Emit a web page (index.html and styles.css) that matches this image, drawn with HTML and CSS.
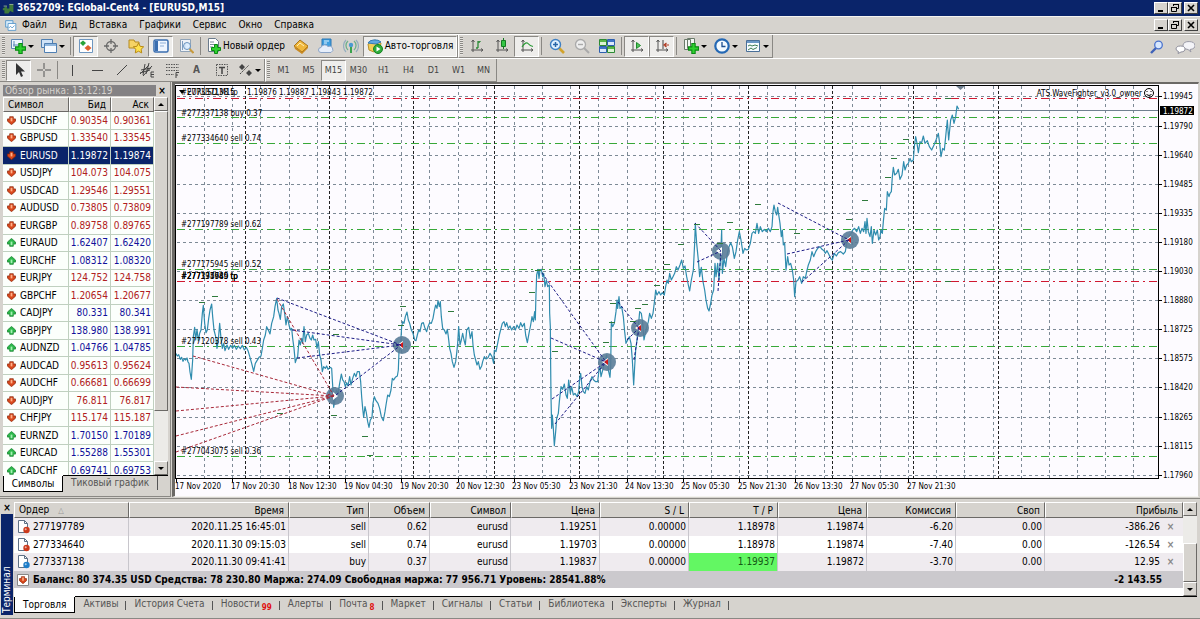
FILE: index.html
```html
<!DOCTYPE html>
<html lang="ru">
<head>
<meta charset="utf-8">
<title>3652709: EGlobal-Cent4 - [EURUSD,M15]</title>
<link rel="stylesheet" href="styles.css">
</head>
<body>
<svg class="defs" aria-hidden="true">
  <symbol id="plus" viewBox="0 0 10 10"><path d="M3.5 .5h3v3h3v3h-3v3h-3v-3h-3v-3h3z" fill="#2fd02f" stroke="#0a8a14"/></symbol>
  <symbol id="down" viewBox="0 0 10 10"><path d="M3 .8h4v2.4h2.4v2.6L5 9.6.6 5.8V3.2H3z" fill="#d9481c" stroke="#8a2408" stroke-width=".8"/><path d="M4 2h2v4H4z" fill="#ffb28a"/></symbol>
  <symbol id="up" viewBox="0 0 10 10"><path d="M3 9.2h4V6.8h2.4V4.4L5 .5.6 4.4v2.4H3z" fill="#2bb84a" stroke="#0c7a26" stroke-width=".8"/><path d="M4 4h2v4H4z" fill="#a4f0b2"/></symbol>
  <symbol id="order" viewBox="0 0 13 14"><path d="M1.5.5h6l3 3v9h-9z" fill="#fff" stroke="#5f7186"/><path d="M7.500.5v3h3" fill="none" stroke="#5f7186"/><circle cx="9.500" cy="10" r="3.200" fill="currentColor"/><circle cx="8.700" cy="9.200" r="1" fill="#fff" opacity=".6"/></symbol>
  <symbol id="min" viewBox="0 0 12 10"><path d="M3 7h5v2H3z"/></symbol>
  <symbol id="restore" viewBox="0 0 12 10"><path d="M4.500 3V1.500h5v4H8M2.500 4.500h5v4h-5zM4 1.500h6M2 4.500h6" fill="none" stroke="#000"/></symbol>
  <symbol id="close" viewBox="0 0 12 10"><path d="M3 2l6 6M9 2L3 8" stroke="#000" stroke-width="1.600"/></symbol>
  <symbol id="axes" viewBox="0 0 16 16"><path d="M4 2v12M2 12h12M2.500 4L4 2l1.500 2M12 10.500l2 1.500-2 1.500" fill="none" stroke="#555"/></symbol>
</svg>

<header class="titlebar">
  <svg class="logo" viewBox="0 0 16 14"><path d="M1 7l5-3v3h3V2h5v10l-4-2-2 3H3V9H1z" fill="#3f7a3c"/><path d="M2 4h4M9 2h5" stroke="#a9c49a"/></svg>
  <h1>3652709: EGlobal-Cent4 - [EURUSD,M15]</h1>
  <div class="win"><button aria-label="Свернуть"><svg><use href="#min"/></svg></button><button aria-label="Развернуть"><svg><use href="#restore"/></svg></button><button class="x" aria-label="Закрыть"><svg><use href="#close"/></svg></button></div>
</header>

<nav class="menubar">
  <svg class="logo" viewBox="0 0 16 14"><path d="M2 1h9v8H2z" fill="#d9ecfb" stroke="#4a90c8"/><path d="M5 4.500h9.500V13H5z" fill="#fff" stroke="#4a90c8"/><path d="M6 10l2-2 2 2 3-3" fill="none" stroke="#4a90c8"/></svg>
  <button>Файл</button><button>Вид</button><button>Вставка</button><button>Графики</button><button>Сервис</button><button>Окно</button><button>Справка</button>
  <div class="win"><button aria-label="Свернуть окно"><svg><use href="#min"/></svg></button><button aria-label="Восстановить окно"><svg><use href="#restore"/></svg></button><button class="x" aria-label="Закрыть окно"><svg><use href="#close"/></svg></button></div>
</nav>

<div class="toolrow">
  <div class="toolbar">
    <i class="grip"></i>
    <button class="tb drop" aria-label="Новый график"><svg viewBox="0 0 16 16"><path d="M1.500 1.500h11v9h-11z" fill="#eef6ff" stroke="#5d87b5"/><path d="M4 3v6M3 7h8" stroke="#5d87b5"/><use href="#plus" x="5" y="5" width="11" height="11"/></svg></button>
    <button class="tb drop" aria-label="Профили"><svg viewBox="0 0 16 16"><path d="M.500 1.500h11v8H.500z" fill="#cfe2f6" stroke="#4f7fb2"/><path d="M3.500 5.500h12v9h-12z" fill="#f6faff" stroke="#4f7fb2"/><path d="M4 6h11v2H4z" fill="#8fb6de"/></svg></button>
    <i class="sep"></i>
    <button class="tb on" aria-label="Обзор рынка"><svg viewBox="0 0 16 16"><path d="M1.500 1.500h13v13h-13z" fill="#fff" stroke="#6f97c0"/><path d="M5 2.500L8 5 5 8 2 5z" fill="#2aa43a"/><path d="M10 7l3.500 3-3.500 3-3.500-3z" fill="#e0602c"/></svg></button>
    <button class="tb" aria-label="Окно данных"><svg viewBox="0 0 16 16"><circle cx="8" cy="8" r="4.500" fill="none" stroke="#6a6a6a" stroke-width="1.300"/><path d="M8 1v5M8 10v5M1 8h5M10 8h5" stroke="#6a6a6a" stroke-width="1.300"/></svg></button>
    <button class="tb" aria-label="Навигатор"><svg viewBox="0 0 16 16"><path d="M1 2h5l1 2h4v6H1z" fill="#f6d365" stroke="#b58a20"/><path d="M10.500 5l1.600 3.300 3.600.5-2.600 2.500.6 3.600-3.200-1.700-3.200 1.700.6-3.600-2.600-2.500 3.600-.5z" fill="#ffe14d" stroke="#b88a14"/></svg></button>
    <button class="tb on" aria-label="Терминал"><svg viewBox="0 0 16 16"><rect x="1" y="2" width="14" height="12" rx="1.500" fill="#eef5ff" stroke="#3a6eb0" stroke-width="1.500"/><path d="M2 3h3v10H2z" fill="#3a6eb0"/><path d="M7 5h6M7 8h4" stroke="#8fb0d8"/></svg></button>
    <button class="tb" aria-label="Тестер стратегий"><svg viewBox="0 0 16 16"><path d="M2.500 1.500h10v12h-10z" fill="#eef2f7" stroke="#8fa3b8"/><path d="M4.500 3v9M7 5v5" stroke="#7d9dc0"/><circle cx="9" cy="8" r="3.500" fill="#d8ecff" fill-opacity=".8" stroke="#6a93bd"/><path d="M11.500 11l4 4" stroke="#c79a3c" stroke-width="2"/></svg></button>
    <i class="sep"></i>
    <button class="tb order-btn"><svg viewBox="0 0 16 16"><path d="M2.500.5h7l3 3v10h-10z" fill="#fff" stroke="#6b7b8c"/><path d="M4 4h4M4 6.500h6M4 9h3" stroke="#7d8c9c"/><use href="#plus" x="5" y="6" width="10" height="10"/></svg>Новый ордер</button>
    <button class="tb" aria-label="MetaEditor"><svg viewBox="0 0 16 16"><path d="M1 8l6-6 8 6-6 6z" fill="#f0b73c" stroke="#a8741a"/><path d="M1 8l1 3 7 5 6-6V8l-6 6z" fill="#c98a22"/><path d="M4 8l3-3 4 3" fill="none" stroke="#fff0b8"/></svg></button>
    <button class="tb" aria-label="Серверы"><svg viewBox="0 0 16 16"><path d="M4 1h9v8H4z" fill="#3f9fe0" stroke="#2b76b4"/><path d="M6 3h5M6 5h3" stroke="#e2f4ff"/><path d="M3 14.500a2.500 2.500 0 0 1 0-5 4 4 0 0 1 7-1 3 3 0 0 1 3 6z" fill="#e6eefa" stroke="#8ba3c6"/></svg></button>
    <button class="tb" aria-label="Сигналы"><svg viewBox="0 0 16 16" fill="none"><path d="M5 12a6 6 0 0 1 0-9M11 3a6 6 0 0 1 0 9" stroke="#6fb08a" stroke-width="1.300"/><path d="M3 14a8.500 8.500 0 0 1 0-12M13 2a8.500 8.500 0 0 1 0 12" stroke="#95aebf" stroke-width="1.200"/><circle cx="8" cy="7" r="2.200" fill="#4a9bd0"/><path d="M8 9v6" stroke="#3aa34c" stroke-width="2"/></svg></button>
    <button class="tb on auto-btn"><svg viewBox="0 0 16 16"><path d="M1 6l7-4 6 3-1 5-6 4-5-2z" fill="#f3cf58" stroke="#b98f28"/><path d="M1 5a7 4 0 0 1 13-1l-5 2z" fill="#5fa8e0" stroke="#357cb5"/><circle cx="11" cy="11" r="4.500" fill="#2eae3c" stroke="#178024"/><path d="M9.500 8.500l4 2.500-4 2.500z" fill="#fff"/></svg>Авто-торговля</button>
  </div>
  <div class="toolbar">
    <i class="grip"></i>
    <button class="tb" aria-label="Бары"><svg viewBox="0 0 16 16"><use href="#axes"/><path d="M7 10h2M9 3v7M9 4h2M11 4v-1" stroke="#2a8a36" stroke-width="1.300"/></svg></button>
    <button class="tb" aria-label="Свечи"><svg viewBox="0 0 16 16"><use href="#axes"/><path d="M9.500 0v11" stroke="#157a22"/><path d="M7.500 2.500h4v6h-4z" fill="#34c544" stroke="#157a22"/></svg></button>
    <button class="tb on" aria-label="Линия"><svg viewBox="0 0 16 16"><use href="#axes"/><path d="M3 9q4-6 6-3.500t5 3" fill="none" stroke="#2a9a36" stroke-width="1.200"/></svg></button>
    <i class="sep"></i>
    <button class="tb" aria-label="Увеличить"><svg viewBox="0 0 16 16"><path d="M10 10l5 5" stroke="#d2a32c" stroke-width="2.600"/><circle cx="6.500" cy="6.500" r="5" fill="#dff0ff" stroke="#3f80c4" stroke-width="1.400"/><path d="M4 6.500h5M6.500 4v5" stroke="#2865a8" stroke-width="1.500"/></svg></button>
    <button class="tb" aria-label="Уменьшить"><svg viewBox="0 0 16 16"><path d="M10 10l5 5" stroke="#aaa" stroke-width="2"/><circle cx="6.500" cy="6.500" r="5" fill="#eee" stroke="#aaa" stroke-width="1.300"/><path d="M4 6.500h5" stroke="#aaa" stroke-width="1.400"/></svg></button>
    <button class="tb" aria-label="Расположить окна"><svg viewBox="0 0 16 16"><path d="M.500 1.500h7v6h-7zM8.500 8.500h7v6h-7z" fill="#dcf3d4" stroke="#2d8a34"/><path d="M8.500 1.500h7v6h-7zM.500 8.500h7v6h-7z" fill="#dbe9fb" stroke="#2d5fae"/><path d="M1 2h6v2H1zM9 9h6v2H9z" fill="#58b548"/><path d="M9 2h6v2H9zM1 9h6v2H1z" fill="#3f74c8"/></svg></button>
    <i class="sep"></i>
    <button class="tb on" aria-label="Автопрокрутка"><svg viewBox="0 0 16 16"><use href="#axes"/><path d="M7.500 4.500l4 3-4 3z" fill="#4fc75a" stroke="#1f8a2c"/></svg></button>
    <button class="tb on" aria-label="Сдвиг графика"><svg viewBox="0 0 16 16"><use href="#axes"/><path d="M9 2v9" stroke="#444"/><path d="M15 7h-4M12.500 5L10 7l2.500 2" fill="none" stroke="#b03a22" stroke-width="1.200"/></svg></button>
    <i class="sep"></i>
    <button class="tb drop" aria-label="Индикаторы"><svg viewBox="0 0 16 16"><path d="M1.500 1.500h6v10h-6zM4.500.500h7v10h-7z" fill="#f3f7f3" stroke="#6a7a6a"/><use href="#plus" x="5" y="5" width="11" height="11"/></svg></button>
    <button class="tb drop" aria-label="Периоды"><svg viewBox="0 0 16 16"><circle cx="8" cy="8" r="6.700" fill="#f3faff" stroke="#2468b4" stroke-width="2.200"/><path d="M8 4v4.500h3.500" fill="none" stroke="#1c4f90" stroke-width="1.300"/></svg></button>
    <button class="tb drop" aria-label="Шаблоны"><svg viewBox="0 0 16 16"><path d="M1.500 2.500h13v11h-13z" fill="#f6fbff" stroke="#4a6f98"/><path d="M2 3h12v2H2z" fill="#6a97c6"/><path d="M3 8l2-1 2 1 3-1 3 1M3 12l3-2 2 1.500 4-2" fill="none" stroke="#3b7a52"/></svg></button>
  </div>
  <div class="right-tools">
    <button aria-label="Поиск"><svg viewBox="0 0 14 14"><path d="M6 8l-5 5" stroke="#3f62b8" stroke-width="2.400"/><circle cx="8.500" cy="5" r="3.800" fill="#d8e8ff" stroke="#4a72cc" stroke-width="1.300"/></svg></button>
    <button aria-label="Чат"><svg class="wide" viewBox="0 0 20 14"><path d="M8 5a6 4 0 1 1 7 4.500l1 2.500-3-2.500A6 4 0 0 1 8 5z" fill="#f4f4f8" stroke="#9a9aa6"/><path d="M1 9a4.500 3 0 1 1 5 3l-3 1.500.5-2A4 3 0 0 1 1 9z" fill="#fff" stroke="#8f8f9c"/></svg></button>
  </div>
</div>

<div class="toolrow second">
  <div class="toolbar">
    <i class="grip"></i>
    <button class="tb on" aria-label="Курсор"><svg viewBox="0 0 16 16"><path d="M5 1v12l3-3 2 5 2-1-2-4.500h4z" fill="#333"/></svg></button>
    <button class="tb" aria-label="Перекрестие"><svg viewBox="0 0 16 16"><path d="M8 1v6M8 9v6M1 8h6M9 8h6" stroke="#555"/></svg></button>
    <i class="sep"></i>
    <button class="tb" aria-label="Вертикальная линия"><svg viewBox="0 0 16 16"><path d="M8.500 3v11" stroke="#444"/></svg></button>
    <button class="tb" aria-label="Горизонтальная линия"><svg viewBox="0 0 16 16"><path d="M3 8.500h11" stroke="#444"/></svg></button>
    <button class="tb" aria-label="Трендовая линия"><svg viewBox="0 0 16 16"><path d="M3 13L13 3" stroke="#444"/></svg></button>
    <button class="tb" aria-label="Равноудаленный канал"><svg viewBox="0 0 16 16"><path d="M1 12L10 3M4 14l9-10M2 8l10-2M1 11l10-3M6 2L4 13M10 1L7 12" stroke="#444" fill="none"/><path d="M15 10h-3v5h3M12 12.500h3" fill="none" stroke="#444"/></svg></button>
    <button class="tb" aria-label="Линии Фибоначчи"><svg viewBox="0 0 16 16"><path d="M2 2.500h13M2 5.500h13M2 8.500h13M2 12.500h8" stroke="#555" stroke-dasharray="1.500 1"/><path d="M15 10.500h-3V16M12 13h2" fill="none" stroke="#444"/></svg></button>
    <button class="tb letter">A</button>
    <button class="tb" aria-label="Текстовая метка"><svg viewBox="0 0 16 16"><path d="M2.500 2.500h11v11h-11z" fill="none" stroke="#555" stroke-dasharray="1.500 1"/><path d="M5 5.500h6M8 5.500V12" stroke="#444" stroke-width="1.500"/></svg></button>
    <button class="tb drop" aria-label="Стрелки"><svg viewBox="0 0 16 16"><path d="M5 2l3 3-3 3-3-3zM12 8l3 3-3 3-3-3z" fill="#444"/><path d="M3 12l9-9" stroke="#444" stroke-dasharray="2 1"/></svg></button>
  </div>
  <div class="toolbar periods">
    <i class="grip"></i>
    <button class="tb">M1</button><button class="tb">M5</button><button class="tb on">M15</button><button class="tb">M30</button><button class="tb">H1</button><button class="tb">H4</button><button class="tb">D1</button><button class="tb">W1</button><button class="tb">MN</button>
  </div>
</div>

<main class="work">
  <section class="watch">
    <div class="watch-title"><h2>Обзор рынка: 13:12:19</h2><button aria-label="Закрыть обзор рынка">×</button></div>
    <div class="watch-body">
      <div class="watch-list">
        <table>
          <colgroup><col><col class="c-bid"><col class="c-ask"></colgroup>
          <thead><tr><th>Символ</th><th>Бид</th><th>Аск</th></tr></thead>
          <tbody>
            <tr class="dn"><td><svg><use href="#down"/></svg>USDCHF</td><td>0.90354</td><td>0.90361</td></tr>
            <tr class="dn"><td><svg><use href="#down"/></svg>GBPUSD</td><td>1.33540</td><td>1.33545</td></tr>
            <tr class="sel"><td><svg><use href="#down"/></svg>EURUSD</td><td>1.19872</td><td>1.19874</td></tr>
            <tr class="dn"><td><svg><use href="#down"/></svg>USDJPY</td><td>104.073</td><td>104.075</td></tr>
            <tr class="dn"><td><svg><use href="#down"/></svg>USDCAD</td><td>1.29546</td><td>1.29551</td></tr>
            <tr class="dn"><td><svg><use href="#down"/></svg>AUDUSD</td><td>0.73805</td><td>0.73809</td></tr>
            <tr class="dn"><td><svg><use href="#down"/></svg>EURGBP</td><td>0.89758</td><td>0.89765</td></tr>
            <tr><td><svg><use href="#up"/></svg>EURAUD</td><td>1.62407</td><td>1.62420</td></tr>
            <tr><td><svg><use href="#up"/></svg>EURCHF</td><td>1.08312</td><td>1.08320</td></tr>
            <tr class="dn"><td><svg><use href="#down"/></svg>EURJPY</td><td>124.752</td><td>124.758</td></tr>
            <tr class="dn"><td><svg><use href="#down"/></svg>GBPCHF</td><td>1.20654</td><td>1.20677</td></tr>
            <tr><td><svg><use href="#up"/></svg>CADJPY</td><td>80.331</td><td>80.341</td></tr>
            <tr><td><svg><use href="#up"/></svg>GBPJPY</td><td>138.980</td><td>138.991</td></tr>
            <tr><td><svg><use href="#up"/></svg>AUDNZD</td><td>1.04766</td><td>1.04785</td></tr>
            <tr class="dn"><td><svg><use href="#down"/></svg>AUDCAD</td><td>0.95613</td><td>0.95624</td></tr>
            <tr class="dn"><td><svg><use href="#down"/></svg>AUDCHF</td><td>0.66681</td><td>0.66699</td></tr>
            <tr class="dn"><td><svg><use href="#down"/></svg>AUDJPY</td><td>76.811</td><td>76.817</td></tr>
            <tr class="dn"><td><svg><use href="#down"/></svg>CHFJPY</td><td>115.174</td><td>115.187</td></tr>
            <tr><td><svg><use href="#up"/></svg>EURNZD</td><td>1.70150</td><td>1.70189</td></tr>
            <tr><td><svg><use href="#up"/></svg>EURCAD</td><td>1.55288</td><td>1.55301</td></tr>
            <tr><td><svg><use href="#up"/></svg>CADCHF</td><td>0.69741</td><td>0.69753</td></tr>
          </tbody>
        </table>
      </div>
      <div class="scroll"><button class="arrow" aria-label="Вверх"></button><div class="thumb"></div><div class="track"></div><button class="arrow down" aria-label="Вниз"></button></div>
    </div>
    <div class="tabs watch-tabs"><button class="active">Символы</button><button>Тиковый график</button></div>
  </section>

  <section class="chart">
    <svg viewBox="175 84 1023 412" role="img" aria-label="EURUSD M15">
      <g class="grid">
        <path d="M176 96H1158M176 126H1158M176 155H1158M176 184H1158M176 213H1158M176 242H1158M176 271H1158M176 300H1158M176 329H1158M176 358H1158M176 387H1158M176 417H1158M176 446H1158M176 475H1158"/>
        <path d="M204 85V478M232 85V478M260 85V478M289 85V478M317 85V478M345 85V478M373 85V478M401 85V478M429 85V478M458 85V478M486 85V478M514 85V478M542 85V478M570 85V478M598 85V478M627 85V478M655 85V478M683 85V478M711 85V478M739 85V478M767 85V478M795 85V478M824 85V478M852 85V478M880 85V478M908 85V478M936 85V478M964 85V478M993 85V478M1021 85V478M1049 85V478M1077 85V478M1105 85V478M1133 85V478"/>
      </g>
      <path class="days" d="M245 85V478M329 85V478M413 85V478M494 85V478M579 85V478M663 85V478M748 85V478M832 85V478M913 85V478M998 85V478"/>
      <path class="bidline" d="M176 110H1158"/>
      <path class="entry" d="M176 117H1158M176 143H1158M176 229H1158M176 269H1158M176 346H1158M176 456H1158"/>
      <path class="profit" d="M176 98H1158M176 281H1158"/>

      <g class="price">
        <polyline transform="translate(170 280) scale(.33333)" points="17,220 22,228 26,224 31,238 35,232 39,244 43,236 47,240 51,234 54,246 57,250 60,276 64,298 68,240 70,170 74,142 77,180 81,148 85,182 89,160 93,150 97,100 100,76 104,130 108,158 112,150 116,116 120,90 125,72 128,110 132,150 137,170 141,205 145,180 149,130 153,175 157,205 161,190 165,212 171,195 176,208 182,196 188,205 193,196 199,208 205,198 211,206 217,196 223,210 229,202 234,212 240,232 245,250 251,274 256,250 261,242 267,232 273,228 277,205 281,180 286,165 290,140 295,150 300,162 305,130 311,110 315,80 320,55 324,90 327,100 331,118 335,80 340,72 344,100 348,135 352,110 357,135 361,150 365,145 368,175 372,205 376,248 380,235 383,230 387,180 391,195 395,175 398,190 402,140 406,185 410,165 415,160 420,175 424,180 428,165 432,180 437,178 441,205 445,185 449,225 453,240 457,275 461,260 466,265 470,258 474,268 480,262 485,265 487,300 490,350 491,382 495,360 499,330 504,340 509,310 514,282 518,300 522,305 526,320 530,308 534,318 539,290 543,315 548,295 553,280 558,290 562,275 568,275 572,305 575,350 578,385 581,412 585,380 589,398 593,425 597,442 601,420 606,412 609,370 613,350 618,362 624,370 629,385 634,410 640,422 645,395 648,375 653,345 658,350 663,330 667,295 671,300 676,292 682,288 685,270 687,215 691,205 695,140 698,125 702,130 706,110 711,96 715,120 719,130 724,150 729,160 734,180 738,182 742,165 746,150 750,155 755,130 760,128 765,145 770,155 774,140 779,128 784,130 789,115 793,92 797,75 801,85 804,62 808,80 811,65 814,110 818,145 823,150 828,162 832,148 835,170 839,205 843,220 847,245 852,262 857,245 860,220 863,190 866,140 870,195 874,180 878,160 882,180 886,195 890,150 896,142 901,175 906,155 909,195 913,225 917,240 921,255 925,245 930,268 935,258"/>
        <polyline transform="translate(480 180) scale(.33333)" points="5,558 8,545 13,530 18,537 24,533 30,520 36,530 41,550 43,510 48,515 53,490 58,465 63,445 67,430 72,425 76,440 80,428 85,445 90,438 95,450 101,440 106,450 111,435 117,445 122,428 127,440 133,430 137,465 142,488 147,460 152,435 156,410 160,425 164,395 166,420 168,340 170,285 174,268 177,295 180,270 184,268 188,290 191,280 195,320 199,300 203,320 208,315 209,400 211,440 212,560 213,650 215,745 217,705 220,745 223,797 227,755 230,715 235,700 238,665 243,620 248,628 253,612 258,645 262,655 266,600 271,640 275,620 280,645 285,640 291,650 296,635 299,595 302,580 306,620 310,635 315,640 320,620 325,630 330,605 336,590 341,600 347,605 353,605 357,570 360,560 363,590 367,575 371,560 376,540 380,525 385,570 390,592 392,560 394,425 398,440 403,430 408,395 411,360 413,385 417,350 420,385 425,380 430,410 434,455 438,490 443,480 448,470 453,490 457,540 461,615 464,560 467,510 471,480 475,440 479,395 484,400 488,430 492,480 497,455 501,440 505,425 509,400 514,415 519,400 524,360 527,330 531,345 537,335 542,345 547,338 553,345 557,320 561,300 565,310 569,280 574,300 579,290 584,280 589,260 594,270 600,255 605,240 610,265 615,258 620,290 625,315 629,333 634,300 640,270 644,190 646,130 650,190 655,240 659,290 664,262 669,305 674,330 678,360 683,385 687,393 692,370 696,345 701,330 705,250 708,290 713,250 717,300 722,230 725,150 727,280 732,235 737,260 742,220 747,200 752,188 757,200 763,235 768,215 773,180 778,155 783,180 789,220 794,205 799,210 805,208 811,190 816,160 821,155 826,160 831,130 836,160 841,140 847,155 853,148 859,155 865,145 871,155 876,140 879,95 882,75 886,95 890,105 893,82 897,110 900,130 904,170 907,150 910,195 914,190 918,270 923,230 927,255 932,250 937,270 941,300 944,350 948,305 954,300 959,290 965,310 970,290 976,295 980,275 985,255 991,240 996,215 1001,230 1007,215 1013,205 1020,200 1026,208 1032,212 1036,220 1041,212 1046,222 1052,235 1057,240 1063,220 1069,228 1075,218 1082,215 1090,222 1096,215 1100,190 1106,170 1112,162 1118,150 1124,145 1130,155 1136,140 1141,160 1146,145 1151,155 1155,125 1158,160 1161,115 1165,155 1170,170 1174,140 1177,190 1182,150 1187,165 1192,150 1196,180 1200,170"/>
        <polyline transform="translate(850 80) scale(.33333)" points="90,470 93,450 97,460 100,425 104,385 109,390 112,335 117,350 120,340 124,335 127,290 130,262 134,285 140,280 145,268 150,298 156,285 161,245 165,270 170,255 175,250 180,235 184,245 190,240 193,200 197,170 201,190 205,218 210,185 215,188 220,168 225,190 232,182 238,200 245,210 252,195 258,180 265,160 269,190 273,230 278,205 283,210 288,160 292,120 296,180 302,120 307,105 312,130 317,110 321,78 326,88"/>
      </g>

      <g class="marks">
        <circle cx="335" cy="396" r="9"/><circle cx="402" cy="345" r="9"/><circle cx="607" cy="362" r="9"/><circle cx="640" cy="328" r="9"/><circle cx="721" cy="251" r="9"/><circle cx="850" cy="240" r="9"/>
        <path d="M403 341v8l-6-4zM608 358v8l-6-4zM641 324v8l-6-4zM722 247v8l-6-4zM851 236v8l-6-4zM333 392l5 4-5 4z" class="white"/>
        <path d="M403 342v6l-4-3zM608 359v6l-4-3zM641 325v6l-4-3zM851 237v6l-4-3z" class="red"/>
      </g>
      <path class="loss-trend" d="M193 356L334 396M176 387L334 396M176 411L334 396M176 436L334 396M176 452L334 396M277 299L334 396"/>
      <path class="trend" d="M277 298L401 345M292 330L401 345M297 358L401 345M336 395L401 345M542 273L606 362M551 338L606 362M552 399L606 362M555 424L606 362M618 302L639 328M627 340L639 328M634 360L639 328M695 223L721 251M697 262L721 251M718 291L721 251M778 203L849 240M787 254L849 240M802 282L849 240"/>
      <path class="ticks" d="M198 302h6M211 296h6M332 334h6M399 306h6M447 311h6M397 325h6M276 413h6M330 415h6M361 436h6M366 455h6M534 270h6M528 292h6M551 351h6M609 303h6M608 322h6M602 342h6M634 308h6M641 304h6M653 285h6M663 264h6M677 244h6M693 224h6M726 222h6M754 204h6M716 243h6M793 233h6M845 219h6M861 200h6M884 177h6M890 158h6M902 139h6M913 117h6M944 98h6M944 281h6M629 321h6"/>

      <path class="axis" d="M175 85H1158V478H175ZM1158 96h3M1158 126h3M1158 155h3M1158 184h3M1158 213h3M1158 242h3M1158 271h3M1158 300h3M1158 329h3M1158 358h3M1158 387h3M1158 417h3M1158 446h3M1158 475h3M176 478v3M232 478v3M289 478v3M345 478v3M401 478v3M458 478v3M514 478v3M570 478v3M627 478v3M683 478v3M739 478v3M795 478v3M852 478v3M908 478v3"/>
      <path class="shift" d="M956 86h9l-4.500 4z"/>

      <g class="label">
        <text x="181" y="95">#277337138 tp</text><path d="M179 90h6l-3 4z"/>
        <text x="187" y="95">EURUSD,M15</text><text x="247" y="95">1.19876 1.19887 1.19843 1.19872</text>
        <text x="181" y="116">#277337138 buy 0.37</text>
        <text x="181" y="141">#277334640 sell 0.74</text>
        <text x="181" y="227">#277197789 sell 0.62</text>
        <text x="181" y="267">#277175945 sell 0.52</text>
        <text x="181" y="279">#277197789 tp</text><text x="181" y="279">#277334640 tp</text><text x="181" y="279">#277175945 tp</text>
        <text x="181" y="344">#277120378 sell 0.43</text>
        <text x="181" y="454">#277043075 sell 0.36</text>
        <text x="1142" y="96" text-anchor="end">ATS.WaveFighter_v3.0_owner</text>
        <g fill="none" stroke="#000"><circle cx="1149" cy="93" r="4.500"/><path d="M1147 91v1M1151 91v1M1146.500 94.500q2.500 2 5 0"/></g>
      </g>
      <g class="label">
        <text x="1163" y="99">1.19945</text><text x="1163" y="129">1.19790</text><text x="1163" y="158">1.19640</text><text x="1163" y="187">1.19485</text><text x="1163" y="216">1.19335</text><text x="1163" y="245">1.19180</text><text x="1163" y="274">1.19030</text><text x="1163" y="303">1.18880</text><text x="1163" y="332">1.18725</text><text x="1163" y="361">1.18575</text><text x="1163" y="390">1.18420</text><text x="1163" y="420">1.18265</text><text x="1163" y="449">1.18115</text><text x="1163" y="478">1.17960</text>
        <path d="M1160 106h34v9h-34z"/><text x="1163" y="114" class="bid">1.19872</text>
      </g>
      <g class="label">
        <text x="175" y="489">17 Nov 2020</text><text x="231" y="489">17 Nov 20:30</text><text x="288" y="489">18 Nov 12:30</text><text x="344" y="489">19 Nov 04:30</text><text x="400" y="489">19 Nov 20:30</text><text x="456" y="489">20 Nov 12:30</text><text x="512" y="489">23 Nov 05:30</text><text x="569" y="489">23 Nov 21:30</text><text x="625" y="489">24 Nov 13:30</text><text x="681" y="489">25 Nov 05:30</text><text x="738" y="489">25 Nov 21:30</text><text x="794" y="489">26 Nov 13:30</text><text x="850" y="489">27 Nov 05:30</text><text x="907" y="489">27 Nov 21:30</text>
      </g>
    </svg>
  </section>
</main>

<section class="terminal">
  <div class="side"><button aria-label="Закрыть терминал">×</button><h2>Терминал</h2></div>
  <div class="term-main">
    <div class="term-body">
      <div class="orders">
        <table>
          <colgroup><col class="w115"><col class="w160"><col class="w80"><col class="w61"><col class="w81"><col class="w89"><col class="w89"><col class="w89"><col class="w89"><col class="w89"><col class="w89"><col></colgroup>
          <thead><tr><th>Ордер <span class="sort">△</span></th><th>Время</th><th>Тип</th><th>Объем</th><th>Символ</th><th>Цена</th><th>S / L</th><th>T / P</th><th>Цена</th><th>Комиссия</th><th>Своп</th><th>Прибыль</th></tr></thead>
          <tbody>
            <tr><td><svg class="sell"><use href="#order"/></svg>277197789</td><td>2020.11.25 16:45:01</td><td>sell</td><td>0.62</td><td>eurusd</td><td>1.19251</td><td>0.00000</td><td>1.18978</td><td>1.19874</td><td>-6.20</td><td>0.00</td><td>-386.26<button aria-label="Закрыть ордер">×</button></td></tr>
            <tr><td><svg class="sell"><use href="#order"/></svg>277334640</td><td>2020.11.30 09:15:03</td><td>sell</td><td>0.74</td><td>eurusd</td><td>1.19703</td><td>0.00000</td><td>1.18978</td><td>1.19874</td><td>-7.40</td><td>0.00</td><td>-126.54<button aria-label="Закрыть ордер">×</button></td></tr>
            <tr><td><svg class="buy"><use href="#order"/></svg>277337138</td><td>2020.11.30 09:41:41</td><td>buy</td><td>0.37</td><td>eurusd</td><td>1.19837</td><td>0.00000</td><td class="near">1.19937</td><td>1.19872</td><td>-3.70</td><td>0.00</td><td>12.95<button aria-label="Закрыть ордер">×</button></td></tr>
          </tbody>
          <tfoot><tr><td colspan="11"><svg viewBox="0 0 12 12"><path d="M.500.500h11v11H.500z" fill="#fff" stroke="#888"/><use href="#down" x="2" y="2" width="8" height="8"/></svg>Баланс: 80 374.35 USD Средства: 78 230.80 Маржа: 274.09 Свободная маржа: 77 956.71 Уровень: 28541.88%</td><td>-2 143.55</td></tr></tfoot>
        </table>
      </div>
      <div class="scroll"><button class="arrow" aria-label="Вверх"></button><div class="track"></div><div class="thumb"></div><button class="arrow down" aria-label="Вниз"></button></div>
    </div>
    <div class="tabs term-tabs"><button class="active">Торговля</button><button>Активы</button><button>История Счета</button><button>Новости<sub>99</sub></button><button>Алерты</button><button>Почта<sub>8</sub></button><button>Маркет</button><button>Сигналы</button><button>Статьи</button><button>Библиотека</button><button>Эксперты</button><button>Журнал</button></div>
  </div>
</section>
</body>
</html>
```

FILE: styles.css
```css
* { box-sizing: border-box; }
body {
  margin: 0;
  background: #d6d3ce;
  color: #000;
  font: 10px/14px "DejaVu Sans Condensed", "DejaVu Sans", sans-serif;
}
h1, h2 { margin: 0; font-size: inherit; }
button {
  margin: 0; padding: 0; border: 0; background: none;
  color: inherit; font: inherit; white-space: nowrap;
}
svg { display: block; flex: none; }
.defs { display: none; }

/* Title and menu */
.titlebar, .menubar { display: flex; align-items: center; padding: 0 2px; }
.titlebar { height: 16px; background: #0a246a; color: #fff; font-weight: bold; }
.logo { width: 13px; height: 13px; margin-right: 2px; }
.menubar { height: 18px; border-bottom: 1px solid #8a8884; border-top: 1px solid #f4f3f0; }
.menubar > .logo { margin: 0 5px 0 2px; }
.menubar > button { margin-right: 12px; }
.win { display: flex; margin-left: auto; }
.menubar .win button, .titlebar .win button {
  width: 14px; height: 12px;
  background: #d6d3ce;
  border: 1px solid; border-color: #fff #404040 #404040 #fff;
}
.win svg { width: 12px; height: 10px; }
.win .x { margin-left: 2px; }

/* Toolbars */
.toolrow { display: flex; height: 24px; border-top: 1px solid #fff; }
.toolbar {
  display: flex; align-items: center; padding-left: 2px;
  border-right: 1px solid #8a8884; border-bottom: 1px solid #8a8884;
}
.toolbar + .toolbar { border-left: 1px solid #fff; padding-left: 1px; }
.grip {
  width: 3px; height: 18px; margin-right: 1px;
  background: repeating-linear-gradient(#8a8884 0 1px, #e8e6e2 1px 2px);
}
.sep { width: 1px; height: 18px; margin: 0 2px; background: #8a8884; }
.second .sep { margin: 0 1px; }
.tb { display: flex; align-items: center; justify-content: center; width: 25px; height: 21px; border: 1px solid transparent; }
.tb svg { width: 16px; height: 16px; }
.tb.on { background: #eeedeb; border-color: #8a8884 #fff #fff #8a8884; }
.tb.drop { width: 31px; gap: 2px; }
.tb.drop::after { content: ""; border: 3px solid transparent; border-top-color: #000; border-bottom: 0; }
.tb.order-btn { width: 85px; gap: 1px; }
.tb.auto-btn { width: 94px; gap: 2px; }
.second .drop { width: 30px; }
.letter { font-weight: bold; color: #555; }
.right-tools { display: flex; align-items: center; gap: 11px; margin-left: auto; padding-right: 5px; }
.right-tools svg { width: 14px; height: 14px; }
.right-tools .wide { width: 20px; }
.periods { color: #444; font-size: 9px; }

/* Work area */
.work { display: flex; }
.watch {
  display: flex; flex-direction: column; flex: none;
  width: 171px; margin-right: 1px; padding: 2px 2px 4px 3px;
  border-right: 1px solid #8a8884; border-bottom: 1px solid #8a8884;
}
.watch-title { display: flex; align-items: center; height: 13px; }
.watch-title h2 { flex: 1; height: 11px; background: #848284; color: #d6d3ce; font-weight: normal; line-height: 11px; padding-left: 2px; }
.watch-title button { width: 12px; font-weight: bold; line-height: 11px; }
.watch-body { display: flex; flex: 1; contain: size; overflow: hidden; }
.watch-list { flex: 1; overflow: hidden; background: #fcfffc; }
table { width: 100%; border-collapse: separate; border-spacing: 0; table-layout: fixed; }
th, td { padding: 0; white-space: nowrap; text-align: right; overflow: hidden; }
th {
  height: 15px; line-height: 13px; background: #d6d3ce; font-weight: normal;
  border: 1px solid; border-color: #fff #6b6966 #6b6966 #fff; padding: 0 4px;
}
th:first-child, td:first-child { text-align: left; }
.c-bid { width: 42px; }
.c-ask { width: 43px; }
.watch td { height: 17px; line-height: 16px; border-right: 1px solid #c0d0c0; border-bottom: 1px solid #c0d0c0; padding-right: 2px; color: #10109a; }
.watch tr:nth-child(odd) td { height: 18px; }
.watch .dn td { color: #b02020; }
.watch td:first-child { color: #000; padding-left: 4px; }
.watch td svg { display: inline-block; width: 9px; height: 9px; margin-right: 4px; vertical-align: -1px; }
.watch .sel td, .watch .sel td:first-child { background: #0a246a; color: #fff; }

.scroll { display: flex; flex-direction: column; flex: none; width: 14px; background: #ecebe8; }
.arrow { height: 14px; flex: none; background: #d6d3ce; border: 1px solid; border-color: #fff #6b6966 #6b6966 #fff; display: flex; align-items: center; justify-content: center; }
.arrow::after { content: ""; border: 3px solid transparent; border-bottom-color: #000; border-top: 0; }
.arrow.down::after { border: 3px solid transparent; border-top-color: #000; border-bottom: 0; }
.thumb { background: #d6d3ce; border: 1px solid; border-color: #fff #6b6966 #6b6966 #fff; }
.watch .thumb { flex: 6; }
.watch .track { flex: 1; }

.tabs { display: flex; border-top: 1px solid #000; color: #555; }
.tabs button { height: 14px; }
.tabs button.active { background: #fff; color: #000; border: 1px solid #000; border-top: 0; box-shadow: 0 -1px #fff; height: 16px; }
.watch-tabs .active { width: 60px; }
.watch-tabs button + button { padding: 0 8px; border-right: 1px solid #555; }

/* Chart */
.chart {
  flex: 1; min-width: 0; background: #fdfbff;
  border: solid #6b6966; border-width: 2px 1px 1px 3px; border-bottom-color: #f4f3f0; border-right-color: #d6d3ce;
  margin-right: 1px;
}
.chart svg { width: 100%; height: auto; }
.chart path, .chart polyline { fill: none; }
.grid, .days, .bidline, .entry, .profit, .axis, .ticks { shape-rendering: crispEdges; transform: translate(0.5px, 0.5px); }
.grid path { stroke: #7d8a96; stroke-dasharray: 3 3; }
.days { stroke: #222; stroke-dasharray: 3 2; }
.bidline { stroke: #708090; }
.entry { stroke: #38a838; stroke-dasharray: 8 4 2 4; }
.profit { stroke: #d01830; stroke-dasharray: 8 4 2 4; }
.price polyline { stroke: #2f8cae; stroke-width: 1.2px; vector-effect: non-scaling-stroke; stroke-linejoin: round; }
.marks circle { fill: #5a7c98; fill-opacity: 0.9; }
.chart .marks .white { fill: #fff; }
.chart .marks .red { fill: #d01818; }
.trend { stroke: #1c1c86; stroke-dasharray: 3 2; }
.loss-trend { stroke: #a82838; stroke-dasharray: 3 2; }
.ticks { stroke: #2f7a3c; }
.axis { stroke: #000; }
.chart .shift { fill: #708090; }
.label { font-size: 8px; fill: #000; }
.chart .label > path { fill: #000; }
.label .bid { fill: #fff; }

/* Terminal */
.terminal { display: flex; margin-top: 1px; padding: 3px 3px 3px 1px; border-top: 1px solid #8a8884; border-bottom: 1px solid #8a8884; }
.side { display: flex; flex-direction: column; width: 12px; margin-right: 1px; }
.side button { height: 12px; font-weight: bold; line-height: 10px; }
.side h2 { flex: 1; background: #0a246a; color: #fff; font-weight: normal; line-height: 12px; writing-mode: vertical-rl; transform: rotate(180deg); padding-top: 2px; }
.term-main { flex: 1; min-width: 0; }
.term-body { display: flex; background: #fff; }
.orders { flex: 1; min-width: 0; padding-bottom: 8px; }
.orders td { height: 18px; line-height: 16px; border-right: 1px solid #c8c6cc; padding-right: 2px; }
.orders tbody tr:nth-child(even) td { height: 17px; }
.orders tbody tr:nth-child(odd) td { background: #efebef; }
.orders tbody td:last-child { border-right: 0; }
.orders td:first-child { padding-left: 3px; }
.orders td svg { display: inline-block; width: 13px; height: 14px; margin-right: 3px; vertical-align: -4px; }
.orders tfoot td svg { width: 12px; height: 12px; margin-right: 4px; vertical-align: -3px; }
.orders td .sell { color: #cc3a1c; }
.orders td .buy { color: #1c7cc8; }
.orders td button { width: 21px; color: #888; font-weight: bold; }
.orders tfoot td { height: 17px; background: #cbc9cd; border: 0; font-weight: bold; }
.orders tfoot td:last-child { padding-right: 21px; }
.orders tbody .near, .orders tbody tr:nth-child(odd) .near { background: #63f763; color: #155a15; }
.sort { color: #999; margin-left: 6px; font-size: 8px; }
.w115 { width: 115px; } .w160 { width: 160px; } .w80 { width: 80px; }
.w61 { width: 61px; } .w81 { width: 81px; } .w89 { width: 89px; }
.terminal .track { flex: 3; }
.terminal .thumb { flex: 4; }
.term-tabs { height: 19px; }
.term-tabs button { padding: 0 8px; position: relative; }
.term-tabs button:not(.active)::after { content: ""; position: absolute; right: 0; top: 4px; height: 9px; border-right: 1px solid #555; }
.term-tabs sub { color: #e01010; font-size: 8px; font-weight: bold; line-height: 8px; margin-left: 2px; vertical-align: -3px; }
```
